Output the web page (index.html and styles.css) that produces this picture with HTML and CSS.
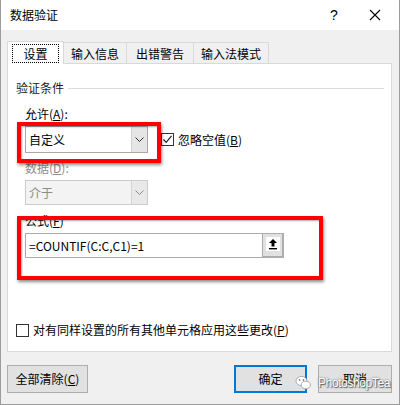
FILE: index.html
```html
<!DOCTYPE html>
<html lang="zh-CN">
<head>
<meta charset="utf-8">
<title>数据验证</title>
<link rel="stylesheet" href="styles.css">
</head>
<body>
<div class="dialog">
  <div class="titlebar">
    <span class="title">数据验证</span>
    <span class="help">?</span>
    <span class="close"><svg width="12" height="12" viewBox="0 0 12 12"><path d="M1 1L11 11M11 1L1 11" stroke="#000" stroke-width="1.1" fill="none"/></svg></span>
  </div>
  <div class="content">
    <div class="tabs">
      <div class="tab tab-active"><span class="focus">设置</span></div>
      <div class="tab tab-w1">输入信息</div>
      <div class="tab tab-w2">出错警告</div>
      <div class="tab tab-w3">输入法模式</div>
    </div>
    <div class="panel">
      <div class="group-head"><span>验证条件</span><span class="rule"></span></div>
      <div class="fields">
        <div class="label label-allow">允许(<u>A</u>):</div>
        <div class="row">
          <div class="combo">
            <span class="combo-text">自定义</span>
            <span class="combo-btn"><svg width="9" height="5" viewBox="0 0 9 5"><path d="M0.5 0.5L4.5 4.5L8.5 0.5" stroke="#333" fill="none"/></svg></span>
          </div>
          <label class="check check-blank"><span class="box"><svg width="11" height="11" viewBox="0 0 11 11"><path d="M1.5 5.5L4.2 8.3L9.5 1.8" stroke="#222" stroke-width="1.2" fill="none"/></svg></span>忽略空值(<u>B</u>)</label>
        </div>
        <div class="label label-data disabled">数据(<u>D</u>):</div>
        <div class="combo combo-disabled">
          <span class="combo-text">介于</span>
          <span class="combo-btn"><svg width="9" height="5" viewBox="0 0 9 5"><path d="M0.5 0.5L4.5 4.5L8.5 0.5" stroke="#888" fill="none"/></svg></span>
        </div>
        <div class="label label-formula">公式(<u>F</u>)</div>
        <div class="row">
          <div class="input">=COUNTIF(C:C,C1)=1</div>
          <div class="ref-btn"><svg width="14" height="14" viewBox="0 0 14 14"><rect x="0" y="0" width="14" height="14" fill="#fff"/><path d="M7 2L11 6H8.5V9.5H5.5V6H3Z" fill="#000"/><rect x="3" y="11" width="8" height="1.4" fill="#000"/></svg></div>
        </div>
      </div>
      <label class="check check-apply"><span class="box"></span>对有同样设置的所有其他单元格应用这些更改(<u>P</u>)</label>
    </div>
    <div class="buttons">
      <div class="btn btn-clear">全部清除(<u>C</u>)</div>
      <div class="spacer"></div>
      <div class="btn btn-ok">确定</div>
      <div class="btn btn-cancel">取消</div>
    </div>
  </div>
  <div class="mark mark-1"></div>
  <div class="mark mark-2"></div>
  <div class="watermark">
    <svg width="16" height="16" viewBox="0 0 16 16"><ellipse cx="6.5" cy="6" rx="5.5" ry="4.6" fill="#fff" stroke="#999" stroke-width="0.8"/><ellipse cx="10.8" cy="10" rx="4.6" ry="3.9" fill="#fff" stroke="#999" stroke-width="0.8"/><circle cx="4.6" cy="5" r="0.9" fill="#888"/><circle cx="8.4" cy="5" r="0.9" fill="#888"/></svg>
    <span>PhotoshopTea</span>
  </div>
</div>
</body>
</html>
```

FILE: styles.css
```css
* { box-sizing: border-box; }
html, body { margin: 0; padding: 0; }
body {
  width: 400px;
  height: 405px;
  font-family: "Noto Sans CJK SC", "Microsoft YaHei", sans-serif;
  font-size: 12px;
  line-height: 16px;
  color: #000;
  background: #f0f0f0;
}
u { text-decoration: underline; text-underline-offset: 1px; }

.dialog {
  position: relative;
  width: 400px;
  height: 405px;
  border: 1px solid #9c9c9c;
  border-top: none;
  background: #f0f0f0;
  display: flex;
  flex-direction: column;
}

.titlebar {
  height: 30px;
  background: #fff;
  display: flex;
  align-items: center;
  padding-left: 9px;
}
.title { flex: 1; font-size: 12px; }
.help {
  width: 20px;
  text-align: center;
  font-family: "Liberation Sans", sans-serif;
  font-size: 14px;
  margin-right: 25px;
}
.close {
  width: 12px;
  height: 12px;
  display: flex;
  margin-right: 18px;
}

.content {
  flex: 1;
  padding: 11px 7px 0 6px;
  display: flex;
  flex-direction: column;
}

.tabs {
  display: flex;
  align-items: flex-end;
  height: 22px;
  position: relative;
  z-index: 1;
}
.tab {
  height: 21px;
  border: 1px solid #d9d9d9;
  border-bottom: none;
  margin-left: -1px;
  background: #f0f0f0;
  display: flex;
  align-items: center;
  justify-content: center;
  padding-top: 2px;
}
.tab-w1 { width: 64px; }
.tab-w2 { width: 68px; }
.tab-w3 { width: 76px; }
.tab-active {
  width: 57px;
  height: 23px;
  margin-left: 0;
  margin-bottom: -1px;
  background: #fff;
  padding: 2px 4px 1px;
  align-items: stretch;
}
.focus {
  flex: 1;
  border: 1px dotted #000;
  display: flex;
  align-items: center;
  justify-content: center;
}

.panel {
  height: 289px;
  background: #fff;
  border: 1px solid #d9d9d9;
  display: flex;
  flex-direction: column;
  padding: 0 7px 0 8px;
}

.group-head {
  display: flex;
  align-items: center;
  gap: 4px;
  margin-top: 16px;
  color: #1a1a1a;
}
.rule { flex: 1; height: 1px; background: #dcdcdc; }

.fields { padding-left: 9px; display: flex; flex-direction: column; align-items: flex-start; }
.label { height: 16px; }
.label-allow { margin-top: 10px; }
.label-data { margin-top: 7px; }
.label-formula { margin-top: 8px; }
.disabled { color: #8c8c8c; }

.row { display: flex; align-items: center; margin-top: 4px; }

.combo {
  width: 123px;
  height: 27px;
  border: 1px solid #a9a9a9;
  background: #fff;
  display: flex;
}
.combo-text { flex: 1; padding-left: 3px; display: flex; align-items: center; }
.combo-btn {
  width: 16px;
  background: #e5e5e5;
  border-left: 1px solid #d0d0d0;
  display: flex;
  align-items: center;
  justify-content: center;
}
.combo-disabled {
  height: 25px;
  margin-top: 4px;
  background: #f3f3f3;
  border-color: #cccccc;
  color: #8c8c8c;
}
.combo-disabled .combo-btn { background: #e9e9e9; border-left-color: #d5d5d5; }

.check { display: flex; align-items: center; }
.box {
  width: 13px;
  height: 13px;
  border: 1px solid #333;
  background: #fff;
  display: flex;
  align-items: center;
  justify-content: center;
  margin-right: 4px;
}
.check-blank { margin-left: 13px; }
.check-apply { margin-top: auto; margin-bottom: 13px; }

.input {
  width: 237px;
  height: 25px;
  border: 1px solid #ababab;
  border-right: none;
  display: flex;
  align-items: center;
  padding-left: 3px;
  font-size: 12px;
}
.ref-btn {
  width: 22px;
  height: 25px;
  background: #e1e1e1;
  border: 1px solid #adadad;
  border-width: 1px 2px 2px 1px;
  display: flex;
  justify-content: center;
  padding-top: 3px;
}

.buttons {
  display: flex;
  margin-top: 13px;
  gap: 11px;
}
.spacer { flex: 1; }
.btn {
  height: 28px;
  background: #e1e1e1;
  border: 1px solid #adadad;
  display: flex;
  align-items: center;
  justify-content: center;
}
.btn-clear { width: 81px; }
.btn-ok { width: 73px; border: 2px solid #0078d7; }
.btn-cancel { width: 74px; }

.mark {
  position: absolute;
  border: 4px solid #ff0000;
  box-shadow: 1px 2px 3px rgba(0,0,0,0.45), inset 1px 1px 2px rgba(0,0,0,0.35);
  pointer-events: none;
}
.mark-1 { left: 16px; top: 122px; width: 144px; height: 41px; }
.mark-2 { left: 16px; top: 216px; width: 306px; height: 64px; }

.watermark {
  position: absolute;
  left: 294px;
  top: 375px;
  display: flex;
  align-items: center;
  gap: 7px;
  font-family: "Liberation Sans", sans-serif;
  font-size: 12px;
  letter-spacing: -0.4px;
  color: #fff;
  text-shadow: 0 0 2px #555, 1px 1px 1px #666;
}
```
